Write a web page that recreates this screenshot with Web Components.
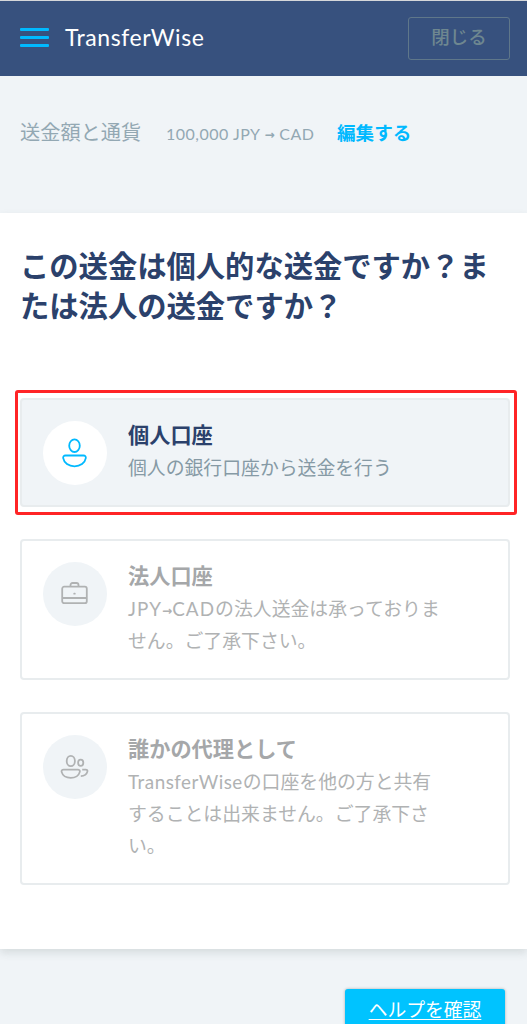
<!DOCTYPE html>
<html lang="ja">
<head>
<meta charset="utf-8">
<title>TransferWise</title>
<style>
  body {
    margin: 0;
    height: 1024px;
    overflow: hidden;
    background: #f0f4f7;
    font-family: Lato, "Noto Sans CJK JP", sans-serif;
  }
  .arrow {
    font-family: "DejaVu Sans", sans-serif;
    font-size: 12px;
    font-weight: 700;
    letter-spacing: 0;
    line-height: 0;
    vertical-align: 1px;
  }
</style>
</head>
<body>
<transfer-page>
  <top-bar slot="header">
    TransferWise
    <span slot="action">閉じる</span>
  </top-bar>
  <transfer-summary slot="summary">
    <span slot="label">送金額と通貨</span>
    <span slot="amount">100,000 JPY <span class="arrow">→</span> CAD</span>
    <span slot="edit">編集する</span>
  </transfer-summary>
  <span slot="title">この送金は個人的な送金ですか？ま<br>たは法人の送金ですか？</span>
  <account-option icon="person" active>
    <span slot="name">個人口座</span>
    個人の銀行口座から送金を行う
  </account-option>
  <account-option icon="briefcase">
    <span slot="name">法人口座</span>
    <span style="letter-spacing: 1.100px">JPY<span class="arrow">→</span>CAD</span>の法人送金は承っておりま<br>せん。ご了承下さい。
  </account-option>
  <account-option icon="people">
    <span slot="name">誰かの代理として</span>
    <span style="letter-spacing: .5px">TransferWise</span>の口座を他の方と共有<br>することは出来ません。ご了承下さ<br>い。
  </account-option>
  <help-button slot="help">ヘルプを確認</help-button>
</transfer-page>

<script>
const icons = {
  person: `<svg width="32" height="32" viewBox="0 0 32 32">
    <ellipse cx="15.500" cy="8.700" rx="5.300" ry="6.300"/>
    <path d="M6.500 18.500h18c1.700 0 2.600 1.100 2.300 2.700C26 26 21.300 29.300 15.500 29.300S5 26 4.200 21.200C3.900 19.600 4.800 18.500 6.500 18.500z"/>
  </svg>`,
  briefcase: `<svg width="32" height="32" viewBox="0 0 32 32">
    <rect x="3.200" y="8.700" width="24.600" height="16.500" rx="2"/>
    <path d="M11.500 8.500V7a2 2 0 0 1 2-2h4a2 2 0 0 1 2 2v1.500M3.200 20h24.600"/>
    <path d="M15.200 15.700h.6" stroke-linecap="round"/>
  </svg>`,
  people: `<svg width="32" height="32" viewBox="0 0 32 32">
    <ellipse cx="11.800" cy="10" rx="4.100" ry="5.200"/>
    <path d="M4.600 18.600h14.200c1.600 0 2.300 1 2 2.300-.8 3.500-4.500 5.900-9.100 5.900s-8.300-2.400-9.100-5.900c-.3-1.300.4-2.300 2-2.300z"/>
    <ellipse cx="21.700" cy="11.800" rx="2.600" ry="3.100"/>
    <path d="M23.200 18.600h3.500c1.400 0 2 .8 1.700 2-.7 2.700-3.200 4.400-6.600 4.500"/>
  </svg>`
};

class TransferPage extends HTMLElement {
  constructor() {
    super();
    this.attachShadow({ mode: "open" }).innerHTML = `
      <style>
        :host { display: block; }
        main {
          box-sizing: border-box;
          height: 736px;
          padding: 33px 17px 0 20px;
          background: #fff;
          box-shadow: 0 4px 8px rgba(60, 75, 80, .14);
        }
        h1 {
          margin: 0;
          color: #2b416b;
          font-size: 29.300px;
          font-weight: 700;
          line-height: 39.500px;
          white-space: nowrap;
        }
        .options {
          display: flex;
          flex-direction: column;
          gap: 32px;
          margin-top: 73px;
        }
        footer {
          display: flex;
          justify-content: flex-end;
          padding: 40px 22px 0 0;
        }
      </style>
      <slot name="header"></slot>
      <slot name="summary"></slot>
      <main>
        <h1><slot name="title"></slot></h1>
        <div class="options"><slot></slot></div>
      </main>
      <footer><slot name="help"></slot></footer>
    `;
  }
}

class TopBar extends HTMLElement {
  constructor() {
    super();
    this.attachShadow({ mode: "open" }).innerHTML = `
      <style>
        :host {
          display: flex;
          align-items: center;
          box-sizing: border-box;
          height: 76px;
          padding: 0 17px 0 20px;
          border-top: 1px solid #d5d7da;
          background: #37517e;
        }
        .menu {
          display: grid;
          gap: 5px;
          width: 29px;
          margin: 0 16px 2px 0;
        }
        .menu i {
          height: 3px;
          border-radius: 1px;
          background: #00b9ff;
        }
        .logo {
          flex: 1;
          margin-bottom: 4px;
          color: #fff;
          font-size: 23px;
          letter-spacing: .55px;
          line-height: 30px;
        }
        .action {
          box-sizing: border-box;
          width: 102px;
          height: 43px;
          border: 1.500px solid #5f778a;
          border-radius: 3px;
          color: #6e8790;
          font-size: 18.500px;
          font-weight: 500;
          line-height: 39px;
          text-align: center;
        }
      </style>
      <div class="menu"><i></i><i></i><i></i></div>
      <div class="logo"><slot></slot></div>
      <div class="action"><slot name="action"></slot></div>
    `;
  }
}

class TransferSummary extends HTMLElement {
  constructor() {
    super();
    this.attachShadow({ mode: "open" }).innerHTML = `
      <style>
        :host {
          display: flex;
          align-items: baseline;
          box-sizing: border-box;
          height: 137px;
          padding: 41px 20px 0;
          color: #93a8b3;
          line-height: 30px;
          white-space: nowrap;
        }
        .label {
          width: 146px;
          font-size: 20.200px;
        }
        .amount {
          width: 171px;
          font-size: 16px;
          letter-spacing: .5px;
        }
        .edit {
          color: #00b9ff;
          font-size: 18.600px;
          font-weight: 700;
        }
      </style>
      <div class="label"><slot name="label"></slot></div>
      <div class="amount"><slot name="amount"></slot></div>
      <div class="edit"><slot name="edit"></slot></div>
    `;
  }
}

class AccountOption extends HTMLElement {
  constructor() {
    super();
    this.attachShadow({ mode: "open" });
  }

  connectedCallback() {
    this.shadowRoot.innerHTML = `
      <style>
        :host {
          position: relative;
          display: flex;
          align-items: flex-start;
          gap: 21px;
          box-sizing: border-box;
          padding: 21px 20px 20px 21px;
          border: 2px solid #e8ecee;
          border-radius: 4px;
          color: #b0b2b3;
        }
        :host([active]) {
          background: #f0f4f7;
          color: #869aa5;
        }
        /* highlight frame around the chosen option */
        :host([active])::after {
          content: "";
          position: absolute;
          inset: -10px -9px -10px -7px;
          border: 3px solid #ff2426;
          border-radius: 3px;
        }
        .icon {
          flex: none;
          display: flex;
          align-items: center;
          justify-content: center;
          width: 64px;
          height: 64px;
          border-radius: 50%;
          background: #f0f4f7;
        }
        :host([active]) .icon { background: #fff; }
        svg {
          fill: none;
          stroke: #b0b2b3;
          stroke-width: 1.800;
          stroke-linejoin: round;
        }
        :host([active]) svg { stroke: #00b9ff; }
        .body {
          padding-bottom: 1px;
        }
        .name {
          margin-bottom: 3px;
          color: #a5a7a9;
          font-size: 21.200px;
          font-weight: 700;
          line-height: 28px;
        }
        :host([active]) .name { color: #2b416b; }
        .text {
          font-size: 18.850px;
          line-height: 32px;
          white-space: nowrap;
        }
      </style>
      <div class="icon">${icons[this.getAttribute("icon")]}</div>
      <div class="body">
        <div class="name"><slot name="name"></slot></div>
        <div class="text"><slot></slot></div>
      </div>
    `;
  }
}

class HelpButton extends HTMLElement {
  constructor() {
    super();
    this.attachShadow({ mode: "open" }).innerHTML = `
      <style>
        :host {
          display: block;
          box-sizing: border-box;
          width: 160px;
          height: 48px;
          border-radius: 3px 3px 0 0;
          background: #00c3ff;
          box-shadow: 0 0 3px rgba(0, 0, 0, .3);
          color: #fff;
          font-size: 18.800px;
          line-height: 42px;
          text-align: center;
        }
        span {
          text-decoration: underline;
          text-decoration-thickness: 1px;
          text-underline-offset: 2px;
        }
      </style>
      <span><slot></slot></span>
    `;
  }
}

customElements.define("transfer-page", TransferPage);
customElements.define("top-bar", TopBar);
customElements.define("transfer-summary", TransferSummary);
customElements.define("account-option", AccountOption);
customElements.define("help-button", HelpButton);
</script>
</body>
</html>
